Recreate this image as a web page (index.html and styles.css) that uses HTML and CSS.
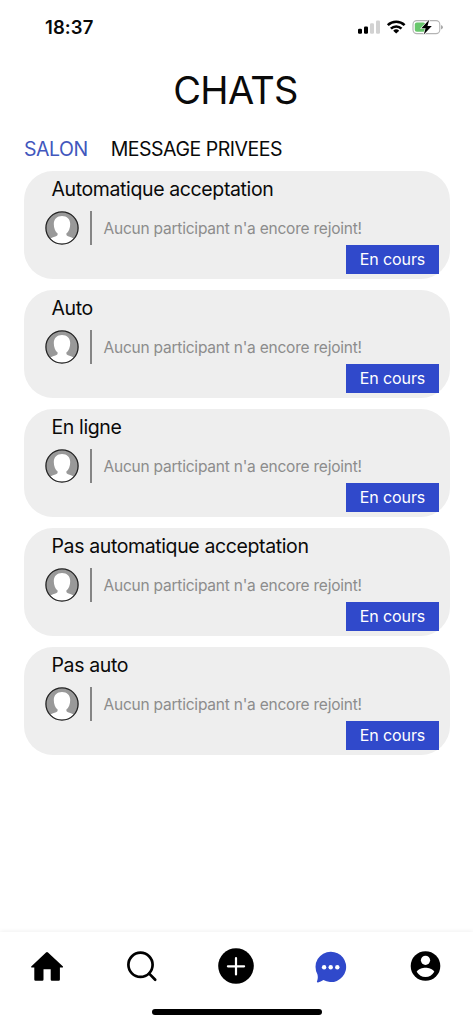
FILE: index.html
```
<!DOCTYPE html>
<html lang="fr">
<head>
<meta charset="utf-8">
<title>Chats</title>
<link rel="stylesheet" href="styles.css">
</head>
<body>
<svg class="defs" width="0" height="0" aria-hidden="true">
  <symbol id="avatar" viewBox="0 0 34 34">
    <circle cx="17" cy="17" r="16" fill="#999"/>
    <path d="M5.2 27.6Q8 26.2 11 25.2Q13 24.4 12.6 22.6C10.3 20.8 8.8 17 8.8 12.9C8.8 7.9 12 4.9 17 4.9S25.2 7.9 25.2 12.9C25.2 17 23.7 20.8 21.4 22.6Q21 24.4 23 25.2Q26 26.2 28.8 27.6A16 16 0 0 1 5.2 27.6Z" fill="#fff"/>
    <circle cx="17" cy="17" r="16.1" fill="none" stroke="#222" stroke-width="1.3"/>
  </symbol>
</svg>
<div class="screen">
  <header class="status">
    <span class="time">18:37</span>
    <svg class="indicators" width="86" height="16" viewBox="0 0 86 16">
      <g fill="#000"><rect x="0" y="8.8" width="4" height="5" rx="1.2"/><rect x="6" y="6.4" width="4" height="7.4" rx="1.2"/></g>
      <g fill="#d2d2d2"><rect x="12" y="3.3" width="4" height="10.5" rx="1.2"/><rect x="18" y="0.4" width="4" height="13.4" rx="1.2"/></g>
      <g fill="none" stroke="#000" stroke-width="2.6"><path d="M29.8 5.1A12.2 12.2 0 0 1 46.6 5.1"/><path d="M32.9 8.6A7.6 7.6 0 0 1 43.5 8.6"/></g>
      <path d="M35.2 10.7A4.4 4.4 0 0 1 41.2 10.7L38.2 13.6Z" fill="#000"/>
      <rect x="55" y=".6" width="26.8" height="13" rx="3.8" fill="none" stroke="#b4b4b4" stroke-width="1.1"/>
      <path d="M83 5V9.4Q85 8.7 85 7.2T83 5Z" fill="#aaa"/>
      <rect x="56.8" y="2.4" width="10.5" height="9.4" rx="2" fill="#69c76d"/>
      <path d="M71.2-.2L63.4 8.2H67.6L65.8 14.5L73.8 6.1H69.5Z" fill="#000" stroke="#fff" stroke-width="1.2" paint-order="stroke"/>
    </svg>
  </header>
  <h1 class="title">CHATS</h1>
  <nav class="tabs"><span class="tab-active">SALON</span><span>MESSAGE PRIVEES</span></nav>
  <main class="rooms">
    <article class="room"><h2 class="room-name">Automatique acceptation</h2><div class="room-info"><svg class="avatar"><use href="#avatar"/></svg><p class="message">Aucun participant n'a encore rejoint!</p></div><span class="badge">En cours</span></article>
    <article class="room"><h2 class="room-name">Auto</h2><div class="room-info"><svg class="avatar"><use href="#avatar"/></svg><p class="message">Aucun participant n'a encore rejoint!</p></div><span class="badge">En cours</span></article>
    <article class="room"><h2 class="room-name">En ligne</h2><div class="room-info"><svg class="avatar"><use href="#avatar"/></svg><p class="message">Aucun participant n'a encore rejoint!</p></div><span class="badge">En cours</span></article>
    <article class="room"><h2 class="room-name">Pas automatique acceptation</h2><div class="room-info"><svg class="avatar"><use href="#avatar"/></svg><p class="message">Aucun participant n'a encore rejoint!</p></div><span class="badge">En cours</span></article>
    <article class="room"><h2 class="room-name">Pas auto</h2><div class="room-info"><svg class="avatar"><use href="#avatar"/></svg><p class="message">Aucun participant n'a encore rejoint!</p></div><span class="badge">En cours</span></article>
  </main>
  <footer class="dock">
    <div class="dock-items">
      <svg class="dock-icon" viewBox="0 0 40 40"><path d="M19 6.4Q20 5.4 21 6.4L36 20.4Q36.6 21.4 35.4 21.4H32.9V33.6Q32.9 34.8 31.7 34.8H24.9Q23.7 34.8 23.7 33.6V23.3H16.5V33.6Q16.5 34.8 15.3 34.8H8.5Q7.3 34.8 7.3 33.6V21.4H4.8Q3.6 21.4 4.2 20.4Z"/></svg>
      <svg class="dock-icon" viewBox="0 0 40 40"><g fill="none" stroke="#000" stroke-width="2.7" stroke-linecap="round"><circle cx="18.5" cy="18.8" r="12.1"/><path d="M27.2 27.6L33.2 33.7"/></g></svg>
      <svg class="dock-icon" viewBox="0 0 40 40"><circle cx="20" cy="20" r="17.8"/><path d="M20 12.2V28.4M11.9 20.3H28.1" fill="none" stroke="#fff" stroke-width="2.2" stroke-linecap="round"/></svg>
      <svg class="dock-icon" viewBox="0 0 40 40"><path d="M19.8 5.7A15.2 15.2 0 1 1 12.4 34.1Q9.6 36.1 7 36.4Q5.3 36.5 6.2 34.7Q7.3 31.7 6.4 28.2A15.2 15.2 0 0 1 19.8 5.7Z" fill="#3049cb"/><g fill="#fff"><circle cx="13.1" cy="21.2" r="2.2"/><circle cx="19.7" cy="21.2" r="2.2"/><circle cx="26.3" cy="21.2" r="2.2"/></g></svg>
      <svg class="dock-icon" viewBox="0 0 40 40"><circle cx="19.5" cy="20" r="14.8"/><circle cx="19.5" cy="14.3" r="4.6" fill="#fff"/><path d="M10.7 25.8C12.1 23 16.5 21.8 19.5 21.8S26.9 23 28.3 25.8Q25.1 31 19.5 31T10.7 25.8Z" fill="#fff"/></svg>
    </div>
    <div class="home-bar"></div>
  </footer>
</div>
</body>
</html>
```

FILE: styles.css
```
* { box-sizing: border-box; }
body, h1, h2, p { margin: 0; }
body { background: #fff; color: #0a0a0a; font-family: Inter, "Liberation Sans", sans-serif; }
.defs { display: block; height: 0; }
.screen { display: flex; flex-direction: column; width: 473px; height: 1024px; overflow: hidden; }
.status { display: flex; align-items: center; justify-content: space-between; height: 54px; padding: 0 30px 0 45px; }
.time { font-size: 18.5px; font-weight: 600; line-height: 24px; letter-spacing: .1px; }
.indicators { margin: 1px -1px 0 0; overflow: visible; }
.title { height: 75px; padding: 12px 2px 0 0; font-size: 38px; font-weight: 400; line-height: 48px; letter-spacing: -.7px; text-align: center; }
.tabs { display: flex; gap: 23px; height: 42px; padding: 8px 24px 0; font-size: 19.5px; line-height: 24px; letter-spacing: -.48px; white-space: nowrap; }
.tab-active { color: #4257bd; }
.rooms { display: flex; flex: 1; flex-direction: column; gap: 11px; padding: 0 23px 0 24px; }
.room { display: flex; flex-direction: column; height: 108px; padding: 5px 11px 0 21px; border-radius: 29px; background: #eee; }
.room-name { padding-left: 6.5px; font-size: 19.5px; font-weight: 400; line-height: 26px; letter-spacing: -.38px; white-space: nowrap; }
.room-info { display: flex; height: 34px; margin-top: 9px; }
.avatar { width: 34px; height: 34px; }
.message { margin-left: 11px; padding-left: 11.5px; border-left: 2px solid #858585; color: #8c8c8c; font-size: 15.5px; line-height: 35px; letter-spacing: -.22px; white-space: nowrap; }
.badge { align-self: flex-end; width: 93px; height: 29px; background: #3049cb; color: #fff; font-size: 16px; line-height: 29px; letter-spacing: -.1px; text-align: center; }
.dock { display: flex; flex-direction: column; align-items: center; height: 92px; background: #fff; box-shadow: 0 -1px 4px rgba(0, 0, 0, .06); }
.dock-items { display: flex; justify-content: space-around; width: 100%; height: 77px; padding-top: 14px; }
.dock-icon { width: 40px; height: 40px; }
.home-bar { width: 170px; height: 6px; border-radius: 3px; background: #000; }
```
